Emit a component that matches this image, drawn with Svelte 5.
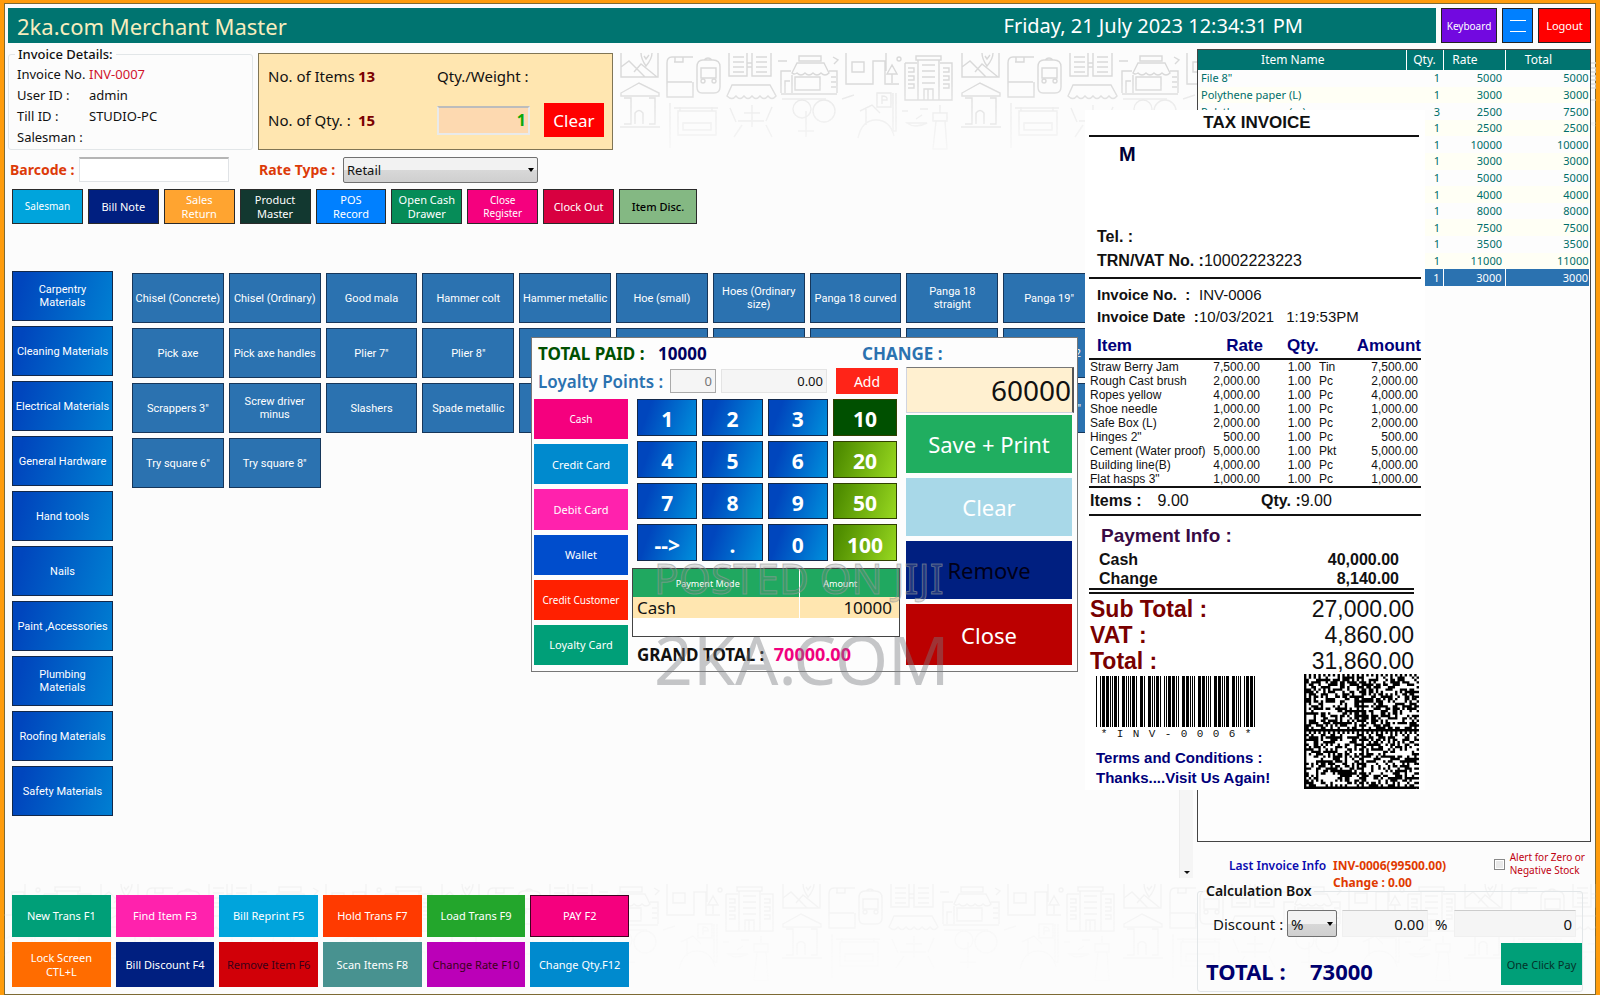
<script>
  let barcode = $state("");
  let rateType = $state("Retail");
  let discountType = $state("%");
  let stockAlert = $state(false);

  const details = [
    ["Invoice No.", "INV-0007"],
    ["User ID :", "admin"],
    ["Till ID :", "STUDIO-PC"],
    ["Salesman :", ""],
  ];

  const tools = [
    { label: "Salesman", tone: "sky" },
    { label: "Bill Note", tone: "navy" },
    { label: "Sales Return", tone: "amber" },
    { label: "Product Master", tone: "forest" },
    { label: "POS Record", tone: "azure" },
    { label: "Open Cash Drawer", tone: "green" },
    { label: "Close Register", tone: "pink" },
    { label: "Clock Out", tone: "crimson" },
    { label: "Item Disc.", tone: "sage" },
  ];

  const categories = [
    "Carpentry\nMaterials",
    "Cleaning Materials",
    "Electrical Materials",
    "General Hardware",
    "Hand tools",
    "Nails",
    "Paint ,Accessories",
    "Plumbing\nMaterials",
    "Roofing Materials",
    "Safety Materials",
  ];

  const products = [
    "Chisel (Concrete)", "Chisel (Ordinary)", "Good mala", "Hammer colt", "Hammer metallic",
    "Hoe (small)", "Hoes (Ordinary\nsize)", "Panga 18 curved", "Panga 18\nstraight", 'Panga 19"',
    "Pick axe", "Pick axe handles", 'Plier 7"', 'Plier 8"', "", "", "", "", "", "2",
    'Scrappers 3"', "Screw driver\nminus", "Slashers", "Spade metallic", "", "", "", "", "", '"',
    'Try square 6"', 'Try square 8"',
  ];

  const actions = [
    { label: "New Trans F1", tone: "teal" },
    { label: "Find Item F3", tone: "rose" },
    { label: "Bill Reprint F5", tone: "sky" },
    { label: "Hold Trans F7", tone: "flame" },
    { label: "Load Trans F9", tone: "leaf" },
    { label: "PAY F2", tone: "pink outlined" },
    { label: "Lock Screen CTL+L", tone: "orange" },
    { label: "Bill Discount F4", tone: "navy" },
    { label: "Remove Item F6", tone: "red dim" },
    { label: "Scan Items F8", tone: "slate" },
    { label: "Change Rate F10", tone: "purple dim" },
    { label: "Change Qty.F12", tone: "blue" },
  ];

  const cart = [
    ['File 8"', 1, 5000, 5000],
    ["Polythene paper (L)", 1, 3000, 3000],
    ["Polythene paper (m)", 3, 2500, 7500],
    ["", 1, 2500, 2500],
    ["", 1, 10000, 10000],
    ["", 1, 3000, 3000],
    ["", 1, 5000, 5000],
    ["", 1, 4000, 4000],
    ["", 1, 8000, 8000],
    ["", 1, 7500, 7500],
    ["", 1, 3500, 3500],
    ["", 1, 11000, 11000],
    ["", 1, 3000, 3000],
  ];

  const payModes = [
    { label: "Cash", tone: "pink" },
    { label: "Credit Card", tone: "blue" },
    { label: "Debit Card", tone: "rose" },
    { label: "Wallet", tone: "royal" },
    { label: "Credit Customer", tone: "scarlet" },
    { label: "Loyalty Card", tone: "teal" },
  ];

  const keys = ["1", "2", "3", "10", "4", "5", "6", "20", "7", "8", "9", "50", "-->", ".", "0", "100"];

  const receiptItems = [
    ["Straw Berry Jam", "7,500.00", "1.00", "Tin", "7,500.00"],
    ["Rough Cast brush", "2,000.00", "1.00", "Pc", "2,000.00"],
    ["Ropes yellow", "4,000.00", "1.00", "Pc", "4,000.00"],
    ["Shoe needle", "1,000.00", "1.00", "Pc", "1,000.00"],
    ["Safe Box (L)", "2,000.00", "1.00", "Pc", "2,000.00"],
    ['Hinges 2"', "500.00", "1.00", "Pc", "500.00"],
    ["Cement (Water proof)", "5,000.00", "1.00", "Pkt", "5,000.00"],
    ["Building line(B)", "4,000.00", "1.00", "Pc", "4,000.00"],
    ['Flat hasps 3"', "1,000.00", "1.00", "Pc", "1,000.00"],
  ];

  // Code 39, bar/space widths alternating, starting with a bar
  const code39 = {
    "*": "nwnnwnwnn",
    I: "nnwnnwwnn",
    N: "nnnnwnnww",
    V: "nwwnnnnnw",
    "-": "nwnnnnwnw",
    0: "nnnwwnwnn",
    6: "nnwwwnnnn",
  };
  const code = [..."*INV-0006*"];

  function codeBars(chars) {
    const bars = [];
    let x = 0;
    for (const c of chars) {
      [...code39[c]].forEach((size, i) => {
        const w = size === "w" ? 3 : 1;
        if (i % 2 === 0) bars.push({ x, w });
        x += w;
      });
      x += 1;
    }
    return bars;
  }
  const bars = codeBars(code);

  // four 24-module regions, each with a solid left/bottom and a dashed top/right edge
  function matrixPath() {
    let seed = 97531;
    let d = "";
    for (let y = 0; y < 48; y++) {
      for (let x = 0; x < 48; x++) {
        const cx = x % 24;
        const cy = y % 24;
        seed = (seed * 16807) % 2147483647;
        let on = seed / 2147483647 < 0.52;
        if (cx === 0 || cy === 23) on = true;
        else if (cy === 0) on = cx % 2 === 0;
        else if (cx === 23) on = cy % 2 === 1;
        if (on) d += `M${x} ${y}h1v1h-1z`;
      }
    }
    return d;
  }
  const matrix = matrixPath();
</script>

{#snippet town(id, x, y)}
  <defs>
    <pattern {id} {x} {y} width="341" height="150" patternUnits="userSpaceOnUse">
      <g fill="none" stroke="#d9d9d9" stroke-width="1.4">
        <path d="M1 0v24h37V0M1 14l8-6 16 16M14 19l7-8 16 13M21 0q0 6 5 13q6-7 6-13M24 3l2 3 3-4" />
        <path d="M73 4H52q-5 0-5 6v34h26V29M47 29h25M55 4v5h8V4M54 9h9" />
        <path d="M77 14q0-7 6-7h10q7 0 7 7v20q0 6-6 6H82q-5 0-5-6zM81 15h15v10H81zM84 7q4-4 8 0M83 40h10" />
        <circle cx="83" cy="28" r="2" /><circle cx="94" cy="28" r="2" />
        <path d="M109 0v23h18V0M132 0v23h19V0M113 4h11M113 9h11M113 14h11M113 19h11M136 4h11M136 9h11M136 14h11M136 19h11M127 10h5M127 14h5" />
        <path d="M112 32h38l6 11q-4 5-8 0q-4 5-8 0q-4 5-8 0q-4 5-8 0q-4 5-8 0q-4 5-9 0z" />
        <path d="M179 3h22v5h-22zM177 10h27l5 10q-4 4-8 0q-4 4-8 0q-4 4-8 0q-4 4-8 0q-3 2-5 0zM161 40V18h10M172 22v18M209 18h8v22M161 41h56M175 24h25v13h-25zM165 40V28h5M211 24h5M211 29h5M211 34h5M158 8h9M213 4l5 3-4 4" />
        <path d="M226 0v31h27V8h12v23h14M232 9h12v10h-12zM266 0v18M272 12l-5 9h10zM272 21v9" /><circle cx="279" cy="6" r="2" />
        <path d="M296 3h25v4h-25zM298 7v40M319 7v40M285 10h12M320 10h12v37h-47V10M302 12h13M302 18h13M302 24h13M302 30h13M304 47V36h9v11M308 36v11M288 15h6v4h-6M288 23h6v4h-6M288 31h6v4h-6M323 15h6v4h-6M323 23h6v4h-6M323 31h6v4h-6" />
        <path d="M1 40l18-10 20 10v3H1zM4 45h7v26H4M29 45h6v26h-6M15 71V60q4-5 8 0v11M0 74h40" />
        <g opacity="0.6">
          <path d="M50 50v45M54 55h44M58 58h38v24H58zM63 70h28v7H63zM60 54v4M92 54v4" />
          <path d="M110 55l6 14M124 60h16M132 52v22M118 68h26M152 54l-6 14M114 84l8-12M146 72l6 12" />
          <path d="M162 46h44M186 58v26M178 78h16" /><circle cx="182" cy="56" r="9" /><circle cx="204" cy="58" r="11" />
          <path d="M238 85q4-18 18-18t18 16M240 58l12-6 8 8M246 56v16M257 40h14v14h-14zM262 51v-8q6 0 5 4h-5M273 40v38h3V40M222 46l12-4" />
          <path d="M287 70q8 6 20 0zM296 66l6-4M313 60h14v8h-14zM316 68l-3 28h14l-2-28M320 52v8M282 58h6M300 56h8" />
        </g>
      </g>
    </pattern>
  </defs>
  <rect width="100%" height="100%" fill="url(#{id})" />
{/snippet}

<div class="shell">
  <svg class="town top" aria-hidden="true">{@render town("town-top", 7, 0)}</svg>
  <svg class="town bottom" aria-hidden="true">{@render town("town-bottom", 96, 6)}</svg>

  <header class="header">
    <div class="titleBar">
      <h1>2ka.com Merchant Master</h1>
      <time datetime="2023-07-21T12:34:31">Friday, 21 July 2023 12:34:31 PM</time>
    </div>
    <button class="keyboard">Keyboard</button>
    <button class="menu" aria-label="Menu">
      <svg width="16" height="14" viewBox="0 0 16 14"><path d="M0 1.500h16M0 12.500h16" stroke="#fff" /></svg>
    </button>
    <button class="logout">Logout</button>
  </header>

  <div class="body">
    <main class="main">
      <div class="summary">
        <fieldset class="details">
          <legend>Invoice Details:</legend>
          <dl>
            {#each details as [label, value], i}
              <dt>{label}</dt>
              <dd class:invoice={i === 0}>{value}</dd>
            {/each}
          </dl>
        </fieldset>

        <section class="counts">
          <span>No. of Items</span>
          <strong>13</strong>
          <label for="qty">Qty./Weight :</label>
          <span></span>
          <span>No. of Qty. :</span>
          <strong>15</strong>
          <input id="qty" type="text" value="1" />
          <button>Clear</button>
        </section>
      </div>

      <div class="entry">
        <label for="barcode">Barcode :</label>
        <input id="barcode" type="text" bind:value={barcode} />
        <label class="rate" for="rate">Rate Type :</label>
        <span class="select">
          <select id="rate" bind:value={rateType}>
            <option>Retail</option>
            <option>Wholesale</option>
          </select>
        </span>
      </div>

      <nav class="tools">
        {#each tools as tool}
          <button class="tile {tool.tone}">{tool.label}</button>
        {/each}
      </nav>

      <div class="catalog">
        <nav class="categories">
          {#each categories as category}
            <button>{category}</button>
          {/each}
        </nav>
        <div class="products">
          {#each products as product, i}
            <button class:edge={i === 19 || i === 29}>{product}</button>
          {/each}
        </div>
        <div class="scroll"><span></span></div>
      </div>

      <footer class="actions">
        {#each actions as action}
          <button class="tile {action.tone}">{action.label}</button>
        {/each}
      </footer>
    </main>

    <aside class="side">
      <div class="cart">
        <table>
          <colgroup>
            <col class="cName" /><col class="cQty" /><col class="cRate" /><col />
          </colgroup>
          <thead>
            <tr><th>Item Name</th><th class="tight">Qty.</th><th>Rate</th><th>Total</th></tr>
          </thead>
          <tbody>
            {#each cart as [name, qty, rate, total], i}
              <tr class:selected={i === cart.length - 1}>
                <td class="name">{name}</td>
                <td>{qty}</td>
                <td>{rate}</td>
                <td class="total">{total}</td>
              </tr>
            {/each}
          </tbody>
        </table>
      </div>

      <div class="last">
        <span class="lastLabel">Last Invoice Info</span>
        <span class="lastValue">INV-0006(99500.00)<br />Change : 0.00</span>
        <label class="alert">
          <input type="checkbox" bind:checked={stockAlert} />
          <span>Alert for Zero or<br />Negative Stock</span>
        </label>
      </div>

      <fieldset class="calc">
        <legend>Calculation Box</legend>
        <div class="discount">
          <label for="discount">Discount :</label>
          <span class="select">
            <select id="discount" bind:value={discountType}>
              <option>%</option>
              <option>Amt</option>
            </select>
          </span>
          <input class="pct" type="text" value="0.00" aria-label="Discount percent" />
          <span>%</span>
          <input class="amt" type="text" value="0" aria-label="Discount amount" />
        </div>
        <div class="grand">
          <span>TOTAL :</span>
          <output>73000</output>
          <button>One Click Pay</button>
        </div>
      </fieldset>
    </aside>
  </div>

  <article class="receipt">
    <h2>TAX INVOICE</h2>
    <p class="shop">M</p>
    <div class="contact">
      <p><b>Tel. :</b></p>
      <p><b>TRN/VAT No. :</b>10002223223</p>
    </div>
    <div class="meta">
      <b>Invoice No. &nbsp;:</b><span>INV-0006</span>
      <b>Invoice Date &nbsp;:</b><span>10/03/2021 <i>1:19:53PM</i></span>
    </div>
    <table class="lines">
      <colgroup>
        <col class="lItem" /><col class="lRate" /><col class="lQty" /><col class="lUnit" /><col />
      </colgroup>
      <thead>
        <tr><th class="left">Item</th><th>Rate</th><th class="qty" colspan="2">Qty.</th><th>Amount</th></tr>
      </thead>
      <tbody>
        {#each receiptItems as [item, rate, qty, unit, amount]}
          <tr><td class="left">{item}</td><td>{rate}</td><td>{qty}</td><td class="unit">{unit}</td><td>{amount}</td></tr>
        {/each}
      </tbody>
    </table>
    <div class="count">
      <span><b>Items :</b>9.00</span>
      <span><b>Qty. :</b>9.00</span>
    </div>
    <h3>Payment Info :</h3>
    <dl class="paid">
      <dt>Cash</dt><dd>40,000.00</dd>
      <dt>Change</dt><dd>8,140.00</dd>
    </dl>
    <dl class="sums">
      <dt>Sub Total :</dt><dd>27,000.00</dd>
      <dt>VAT :</dt><dd>4,860.00</dd>
      <dt>Total :</dt><dd>31,860.00</dd>
    </dl>
    <div class="codes">
      <div>
        <svg class="bars" width="160" height="51" viewBox="0 0 160 51" shape-rendering="crispEdges" aria-hidden="true">
          {#each bars as bar}
            <rect x={bar.x} y="0" width={bar.w} height="51" />
          {/each}
        </svg>
        <div class="codeText">
          {#each code as char}<span>{char}</span>{/each}
        </div>
        <p class="terms">Terms and Conditions :<br />Thanks....Visit Us Again!</p>
      </div>
      <svg class="matrix" width="115" height="115" viewBox="0 0 48 48" aria-hidden="true"><path d={matrix} /></svg>
    </div>
  </article>

  <section class="dialog" aria-label="Payment">
    <div class="paidRow">
      <span class="paidLabel">TOTAL PAID :</span>
      <span class="paidValue">10000</span>
      <span class="change">CHANGE :</span>
    </div>
    <div class="dialogBody">
      <div class="payLeft">
        <div class="loyalty">
          <label for="points">Loyalty Points :</label>
          <input id="points" class="points" type="text" value="0" />
          <input class="worth" type="text" value="0.00" aria-label="Points value" />
          <button>Add</button>
        </div>
        <div class="payGrid">
          <div class="modes">
            {#each payModes as mode}
              <button class={mode.tone}>{mode.label}</button>
            {/each}
          </div>
          <div class="pad">
            <div class="keys">
              {#each keys as key, i}
                <button class:note={i % 4 === 3} class:dark={key === "10"}>{key}</button>
              {/each}
            </div>
            <div class="payments">
              <table>
                <thead><tr><th>Payment Mode</th><th class="amount">Amount</th></tr></thead>
                <tbody><tr><td>Cash</td><td class="amount">10000</td></tr></tbody>
              </table>
            </div>
            <p class="grandTotal">GRAND TOTAL : <span>70000.00</span></p>
          </div>
        </div>
      </div>
      <div class="payRight">
        <input type="text" value="60000" aria-label="Amount tendered" />
        <div class="commands">
          <button class="save">Save + Print</button>
          <button class="wipe">Clear</button>
          <button class="navy remove">Remove</button>
          <button class="close">Close</button>
        </div>
      </div>
    </div>
  </section>

  <div class="watermark" aria-hidden="true">
    <span class="posted">POSTED ON JIJI</span>
    <span class="seller">2KA.COM</span>
  </div>
</div>

<style>
  :global(body) {
    margin: 0;
    background: #fcfcfc;
  }

  .shell,
  .shell :global(*) {
    box-sizing: border-box;
  }

  .shell {
    position: relative;
    display: flex;
    flex-direction: column;
    min-height: 100vh;
    padding: 5px 5px 3px 4px;
    border: solid #ff9c0c;
    border-width: 3px 4px 0;
    box-shadow: inset 0 0 0 1px #7d6a34;
    background: #fcfcfc;
    color: #111;
    font: 13px "Noto Sans", sans-serif;
    overflow: hidden;
  }

  button,
  input,
  select {
    margin: 0;
    padding: 0;
    border: 0;
    border-radius: 0;
    font: inherit;
    color: inherit;
  }

  button {
    color: #fff;
  }

  h1,
  h2,
  h3,
  p,
  dl,
  dd {
    margin: 0;
  }

  table {
    border-collapse: collapse;
    table-layout: fixed;
    width: 100%;
  }

  fieldset {
    margin: 0;
    padding: 0;
    min-width: 0;
    border: 1px solid #e2e6e8;
    border-radius: 3px;
  }

  .town {
    position: absolute;
    pointer-events: none;
  }

  .town.top {
    left: 609px;
    top: 50px;
    width: calc(100% - 609px);
    height: 130px;
    mask-image: linear-gradient(#000 20%, transparent 90%);
  }

  .town.bottom {
    left: 0;
    bottom: 0;
    width: 100%;
    height: 117px;
    opacity: 0.25;
    mask-image: linear-gradient(#000 20%, transparent);
  }

  .header {
    position: relative;
    display: flex;
    height: 35px;
    gap: 5px;
  }

  .titleBar {
    flex: 1;
    display: flex;
    align-items: center;
    justify-content: space-between;
    padding: 0 133px 0 9px;
    background: #007470;
    white-space: nowrap;
  }

  .titleBar h1 {
    color: #f7edbe;
    font-size: 22px;
    font-weight: 400;
  }

  .titleBar time {
    color: #fff;
    font-size: 20px;
  }

  .header button {
    border: 1px solid #222;
    font-size: 11px;
  }

  .header .keyboard {
    width: 56px;
    background: #7209e0;
    font-size: 10px;
  }

  .header .menu {
    display: grid;
    place-items: center;
    width: 31px;
    background: #0080ff;
  }

  .header .logout {
    width: 53px;
    background: #f00;
  }

  .body {
    position: relative;
    flex: 1;
    display: flex;
    gap: 4px;
  }

  .main {
    flex: 1;
    display: flex;
    flex-direction: column;
    min-width: 0;
    padding-bottom: 5px;
  }

  .summary {
    display: flex;
    gap: 5px;
    align-items: flex-end;
    margin-top: 1px;
  }

  .details {
    width: 245px;
    height: 106px;
  }

  .details legend {
    margin-left: 6px;
    padding: 0 3px;
    font-size: 13px;
    font-weight: 500;
    line-height: 20px;
  }

  .details dl {
    display: grid;
    grid-template-columns: 72px 1fr;
    padding-left: 8px;
    font-size: 13px;
    line-height: 21px;
  }

  .details .invoice {
    color: #d0142c;
  }

  .counts {
    display: grid;
    grid-template-columns: 90px 79px 107px 60px;
    grid-template-rows: 44px 44px;
    align-items: center;
    width: 355px;
    height: 97px;
    padding-left: 9px;
    border: 1px solid #807555;
    background: #ffe6b0;
    font-size: 15px;
    white-space: nowrap;
  }

  .counts strong {
    color: #7a0000;
  }

  .counts input {
    width: 93px;
    height: 29px;
    padding-right: 2px;
    border: 2px solid #e9eaea;
    border-top-color: #bcbcbc;
    background: #fdd9b0;
    color: #0aa80a;
    font-size: 16px;
    font-weight: 700;
    text-align: right;
  }

  .counts button {
    height: 34px;
    background: #f00;
    font-size: 17px;
  }

  .entry {
    display: flex;
    align-items: center;
    height: 25px;
    margin-top: 7px;
    padding-left: 2px;
  }

  .entry label {
    width: 69px;
    color: #dc3a08;
    font-size: 14px;
    font-weight: 700;
    white-space: nowrap;
  }

  .entry .rate {
    width: 84px;
    margin-left: 30px;
  }

  .entry input {
    width: 150px;
    height: 25px;
    border: 1px solid #e0e3e6;
    border-top: 2px solid #b5b5b5;
    background: #fff;
  }

  .entry .select {
    width: 195px;
    height: 26px;
  }

  .select {
    position: relative;
    display: block;
  }

  .select select {
    appearance: none;
    width: 100%;
    height: 100%;
    padding-left: 3px;
    border: 1px solid #707070;
    border-radius: 2px;
    background: linear-gradient(#f2f2f2 50%, #d8d8d8 50%, #cfcfcf);
    font-size: 13px;
  }

  .select::after {
    content: "";
    position: absolute;
    right: 4px;
    top: 50%;
    margin-top: -2px;
    border: 3px solid transparent;
    border-top: 4px solid #000;
    border-bottom: 0;
    pointer-events: none;
  }

  .tools {
    display: grid;
    grid-template: 35px / repeat(8, 1fr) 78px;
    gap: 5px;
    width: 685px;
    height: 35px;
    margin: 7px 0 0 4px;
  }

  .tile {
    font-size: 11px;
    line-height: 14px;
  }

  .tools .tile {
    padding: 0 4px;
    border: 1px solid #2a2a2a;
  }

  .tools .amber,
  .tools .forest,
  .tools .azure,
  .tools .pink {
    padding: 0 10px;
  }

  .tools .tile:first-child,
  .tools .pink {
    font-size: 10px;
    line-height: 13px;
  }

  .tools .green,
  .tools .crimson {
    padding: 0;
  }

  .sky { background: #00a4dc; }
  .navy { background: #001f80; }
  .amber { background: #ffa430; }
  .forest { background: #123830; }
  .azure { background: #0080ff; }
  .green { background: #068c58; }
  .pink { background: #f5007e; }
  .crimson { background: #d80040; }
  .tools .sage { background: #84b883; color: #000; font-weight: 500; }
  .teal { background: #009f78; }
  .rose { background: #ff22ad; }
  .flame { background: #ff3a00; }
  .leaf { background: #23a62c; }
  .orange { background: #ff6c00; }
  .red { background: #d10008; }
  .slate { background: #489290; }
  .purple { background: #bb00b8; }
  .blue { background: #008ace; }
  .royal { background: #004dcc; }
  .scarlet { background: #ff2000; }
  .dim { color: #3a0018; }
  .outlined { border: 1px solid #400020; }

  .catalog {
    flex: 1;
    display: flex;
    margin: 47px 0 0 4px;
    font: 11px/13px Roboto, sans-serif;
  }

  .categories {
    display: flex;
    flex-direction: column;
    gap: 5px;
    width: 101px;
  }

  .categories button {
    height: 50px;
    border: 1px solid #12284a;
    background: linear-gradient(105deg, #0046bd 10%, #007fd2);
    white-space: pre-line;
  }

  .products {
    flex: 1;
    display: grid;
    grid-template-columns: repeat(10, 1fr);
    grid-auto-rows: 50px;
    gap: 5px;
    align-content: start;
    margin: 2px 84px 0 19px;
  }

  .products button {
    border: 1px solid #16365a;
    background: #2b72b0;
    white-space: pre-line;
  }

  .products .edge {
    padding-right: 13px;
    text-align: right;
  }

  .scroll {
    display: flex;
    align-items: flex-end;
    justify-content: center;
    width: 14px;
    padding-bottom: 4px;
    border-left: 1px solid #ededed;
    background: #f5f5f5;
  }

  .scroll span {
    border: 3px solid transparent;
    border-top: 3px solid #111;
    border-bottom: 0;
  }

  .actions {
    display: grid;
    grid-template: 42px 45px / repeat(6, 1fr);
    gap: 5px;
    width: 617px;
    margin: 17px 0 0 4px;
  }

  .actions .tile {
    white-space: nowrap;
  }

  .actions .orange {
    padding: 0 10px;
    white-space: normal;
  }

  .side {
    display: flex;
    flex-direction: column;
    width: 394px;
    padding-top: 6px;
  }

  .cart {
    flex: 1;
    border: 1px solid #444;
    background: #fdfdfd;
  }

  .cart table {
    height: 236px;
    color: #006e6a;
    font-size: 11px;
    line-height: 14px;
  }

  .cName { width: 208px; }
  .cQty { width: 37px; }
  .cRate { width: 62px; }

  .cart th {
    height: 20px;
    padding: 0 18px 0 0;
    border-right: 1px solid #fff;
    background: #007470;
    color: #fff;
    font-size: 12px;
    font-weight: 400;
  }

  .cart th.tight {
    padding: 0;
  }

  .cart th:last-child,
  .cart td:last-child {
    border-right: 0;
  }

  .cart td {
    padding: 0 3px 0 0;
    text-align: right;
  }

  .cart tbody tr:nth-child(even) {
    background: #fffff5;
  }

  .cart .name {
    padding-left: 3px;
    text-align: left;
  }

  .cart .total {
    padding-right: 1px;
  }

  .cart .selected {
    background: #2b72b0;
    color: #fff;
  }

  .cart .selected td {
    border-right: 1px solid #fff;
  }

  .last {
    display: flex;
    gap: 7px;
    margin-bottom: -10px;
    padding: 15px 6px 0 32px;
    font-size: 12px;
    font-weight: 600;
    line-height: 17px;
    white-space: nowrap;
  }

  .lastLabel {
    color: #0a0ab0;
  }

  .lastValue {
    flex: 1;
    color: #e03a00;
    font-weight: 700;
  }

  .alert {
    display: flex;
    align-items: flex-start;
    gap: 5px;
    color: #c00010;
    font-size: 10px;
    font-weight: 400;
    line-height: 13px;
    margin-top: -6px;
  }

  .alert input {
    appearance: none;
    width: 11px;
    height: 11px;
    margin-top: 8px;
    border: 1px solid #888;
    background: #e9e9e9;
    box-shadow: inset 0 0 0 1px #fff;
  }

  .calc {
    width: 386px;
    height: 111px;
  }

  .calc legend {
    margin-left: 5px;
    padding: 0 3px;
    font-size: 14px;
    font-weight: 600;
    line-height: 20px;
  }

  .discount {
    display: flex;
    align-items: center;
    height: 27px;
    margin: 9px 6px 0 15px;
    font-size: 15px;
  }

  .discount label {
    width: 74px;
  }

  .discount .select {
    width: 50px;
    height: 27px;
    margin-right: 5px;
  }

  .discount .select select {
    font-size: 15px;
  }

  .discount input {
    height: 27px;
    padding-right: 3px;
    border: 1px solid #f0f0f0;
    border-top: 1px solid #ccc;
    background: #f5f5f5;
    text-align: right;
  }

  .discount .pct {
    width: 86px;
    margin-right: 7px;
  }

  .discount .amt {
    flex: 1;
    min-width: 0;
    margin-left: 7px;
  }

  .grand {
    display: flex;
    align-items: center;
    height: 42px;
    margin: 6px 0 0 8px;
    color: #00006e;
    font-size: 22px;
    font-weight: 700;
  }

  .grand span {
    width: 104px;
  }

  .grand output {
    flex: 1;
  }

  .grand span,
  .grand output {
    padding-top: 13px;
  }

  .grand button {
    align-self: stretch;
    width: 81px;
    background: #009f78;
    color: #04322a;
    font-size: 11px;
    font-weight: 400;
  }

  .receipt {
    position: absolute;
    top: 107px;
    right: 171px;
    width: 340px;
    height: 680px;
    padding: 0 4px 0 4px;
    background: #fff;
    color: #111;
    font: 16px "Liberation Sans", Arial, sans-serif;
  }

  .receipt h2 {
    height: 27px;
    margin-right: 2px;
    padding-left: 6px;
    border-bottom: 2px solid #111;
    font-size: 17px;
    line-height: 25px;
    text-align: center;
  }

  .shop {
    height: 88px;
    padding: 6px 0 0 30px;
    color: #000036;
    font-size: 20px;
    font-weight: 700;
  }

  .contact {
    height: 54px;
    padding: 0 0 0 8px;
    line-height: 24px;
    border-bottom: 2px solid #111;
  }

  .meta {
    display: grid;
    grid-template-columns: 102px 1fr;
    height: 55px;
    padding: 5px 0 0 8px;
    font-size: 15px;
    line-height: 22px;
    white-space: nowrap;
    align-content: start;
  }

  .meta i {
    margin-left: 8px;
    font-style: normal;
  }

  .lines {
    font-size: 12px;
  }

  .lItem { width: 114px; }
  .lRate { width: 60px; }
  .lQty { width: 51px; }
  .lUnit { width: 35px; }

  .lines th {
    height: 25px;
    padding: 0;
    border-bottom: 2px solid #111;
    color: #00007a;
    font-size: 17px;
    text-align: right;
  }

  .lines th.left {
    padding-left: 8px;
  }

  .lines th.qty {
    padding-left: 24px;
    text-align: left;
  }

  .lines td {
    height: 14px;
    padding: 0 3px 0 0;
    line-height: 14px;
    text-align: right;
    white-space: nowrap;
  }

  .lines .left {
    padding: 0 0 0 1px;
    text-align: left;
  }

  .lines .unit {
    padding-left: 5px;
    text-align: left;
  }

  .count {
    display: grid;
    grid-template-columns: 171px 1fr;
    height: 30px;
    padding-left: 1px;
    border: solid #111;
    border-width: 2px 0;
    line-height: 26px;
  }

  .count span:first-child b {
    margin-right: 16px;
  }

  .receipt h3 {
    height: 34px;
    padding-left: 12px;
    color: #380a44;
    font-size: 19px;
    line-height: 40px;
  }

  .paid {
    display: grid;
    grid-template-columns: 1fr 100px;
    height: 44px;
    margin: 0 7px 0 0;
    padding: 0 15px 0 10px;
    border-bottom: 6px double #111;
    font-weight: 700;
    line-height: 19px;
  }

  .paid dd,
  .sums dd {
    text-align: right;
  }

  .sums {
    display: grid;
    grid-template-columns: 1fr 120px;
    height: 78px;
    margin: 2px 7px 0 0;
    padding-left: 1px;
    font-size: 23px;
    line-height: 26px;
  }

  .sums dt {
    color: #780000;
    font-weight: 700;
  }

  .codes {
    display: flex;
    justify-content: space-between;
    padding: 0 2px 0 7px;
  }

  .bars {
    display: block;
    margin-top: 2px;
  }

  .codeText {
    display: flex;
    justify-content: space-around;
    width: 160px;
    font: 11px/14px "Liberation Mono", monospace;
  }

  .terms {
    margin-top: 7px;
    color: #00007a;
    font-size: 15px;
    font-weight: 700;
    line-height: 20px;
    white-space: nowrap;
  }

  .dialog {
    position: absolute;
    top: 334px;
    left: 527px;
    width: 547px;
    height: 335px;
    border: 1px solid #777;
    background: #fdfdfd;
  }

  .paidRow {
    display: flex;
    height: 29px;
    padding-left: 6px;
    font-size: 17px;
    font-weight: 700;
    line-height: 32px;
    white-space: nowrap;
  }

  .paidLabel {
    width: 120px;
    color: #005000;
  }

  .paidValue {
    width: 204px;
    color: #00005e;
  }

  .change {
    color: #2b72b0;
  }

  .dialogBody {
    display: flex;
    padding: 0 3px 0 2px;
  }

  .payLeft {
    flex: 1;
    margin-right: 6px;
  }

  .loyalty {
    display: flex;
    align-items: center;
    height: 27px;
    margin-bottom: 5px;
    padding: 1px 2px 0 4px;
  }

  .loyalty label {
    width: 132px;
    color: #2b72b0;
    font-size: 17px;
    font-weight: 600;
    white-space: nowrap;
  }

  .loyalty input {
    height: 24px;
    padding-right: 3px;
    border: 1px solid #e4e4e4;
    background: #f5f5f5;
    font-size: 13px;
    text-align: right;
  }

  .loyalty .points {
    width: 46px;
    margin-right: 5px;
    border-color: #aaa;
    color: #777;
  }

  .loyalty .worth {
    width: 106px;
    margin-right: 9px;
  }

  .loyalty button {
    flex: 1;
    height: 26px;
    background: #ff2418;
    font-size: 14px;
  }

  .payGrid {
    display: flex;
    gap: 4px;
    height: 266px;
  }

  .modes {
    display: grid;
    grid-auto-rows: 1fr;
    gap: 5px;
    width: 94px;
    font-size: 11px;
  }

  .modes button {
    white-space: nowrap;
  }

  .modes .pink,
  .modes .scarlet {
    font-size: 10px;
  }

  .pad {
    flex: 1;
  }

  .keys {
    display: grid;
    grid-template: repeat(4, 1fr) / repeat(3, 1fr) 64px;
    gap: 5px;
    height: 162px;
    margin: 0 3px 7px 5px;
  }

  .keys button {
    padding-top: 4px;
    border: 1px solid #12284a;
    background: linear-gradient(110deg, #0046bd 20%, #008fdc);
    font-size: 21px;
    font-weight: 700;
    line-height: 24px;
  }

  .keys .note {
    border-color: #304000;
    background: linear-gradient(110deg, #4f8d00 10%, #98d820);
  }

  .keys .dark {
    background: #005000;
  }

  .payments {
    height: 69px;
    border: 1px solid #444;
    background: #fff;
  }

  .payments th {
    height: 28px;
    padding: 0;
    border-right: 1px solid #fff;
    background: #20a860;
    color: #fff;
    font-size: 9px;
    font-weight: 400;
  }

  .payments th:first-child {
    padding-right: 16px;
  }

  .payments td {
    height: 21px;
    padding: 0 4px;
    border-right: 1px solid #fff;
    background: #ffe6b0;
    font-size: 17px;
    line-height: 20px;
  }

  .payments .amount {
    width: 100px;
    border-right: 0;
  }

  .payments td.amount {
    padding-right: 7px;
    text-align: right;
  }

  .payments th.amount {
    padding-right: 18px;
  }

  .grandTotal {
    padding-left: 5px;
    font-size: 17px;
    font-weight: 700;
    line-height: 34px;
    white-space: nowrap;
  }

  .grandTotal span {
    margin-left: 5px;
    color: #f0007e;
    font-size: 18px;
  }

  .payRight {
    width: 168px;
  }

  .payRight input {
    width: 168px;
    height: 46px;
    padding-right: 1px;
    border: 1px solid #d0d4e0;
    border-top-color: #777;
    border-right: 2px solid #555;
    background: #fff0d0;
    font-size: 28px;
    text-align: right;
  }

  .commands {
    display: grid;
    grid-template-rows: 58px 58px 58px 61px;
    gap: 5px;
    width: 166px;
    margin-top: 2px;
    font-size: 22px;
  }

  .save { background: #20ae60; }
  .wipe { background: #a8d8e8; }
  .close { background: #bb0000; }

  .commands .remove {
    color: #000018;
  }

  .watermark {
    position: absolute;
    left: 650px;
    top: 550px;
    display: flex;
    flex-direction: column;
    pointer-events: none;
    white-space: nowrap;
  }

  .posted {
    color: rgba(130, 130, 130, 0.25);
    font-size: 41px;
    line-height: 50px;
    -webkit-text-stroke: 1px rgba(150, 155, 155, 0.6);
  }

  .seller {
    margin-top: 14px;
    color: rgba(120, 122, 126, 0.42);
    font-size: 68px;
    line-height: 84px;
  }
</style>
